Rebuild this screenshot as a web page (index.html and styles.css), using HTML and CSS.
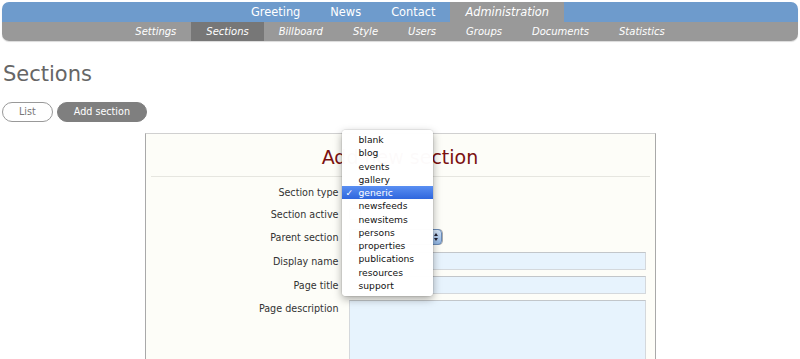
FILE: index.html
```html
<!DOCTYPE html>
<html lang="en">
<head>
    <meta charset="UTF-8">
    <title>Sections</title>
    <link rel="stylesheet" href="styles.css">
</head>
<body>
    <nav class="menu">
        <ul class="menu-top">
            <li><a href="#">Greeting</a></li>
            <li><a href="#">News</a></li>
            <li><a href="#">Contact</a></li>
            <li class="current"><a href="#">Administration</a></li>
        </ul>
        <ul class="menu-sub">
            <li><a href="#">Settings</a></li>
            <li class="current"><a href="#">Sections</a></li>
            <li><a href="#">Billboard</a></li>
            <li><a href="#">Style</a></li>
            <li><a href="#">Users</a></li>
            <li><a href="#">Groups</a></li>
            <li><a href="#">Documents</a></li>
            <li><a href="#">Statistics</a></li>
        </ul>
    </nav>

    <main>
        <h1 class="page-title">Sections</h1>

        <div class="actions">
            <a href="#" class="btn">List</a>
            <a href="#" class="btn btn-active">Add section</a>
        </div>

        <form class="box">
            <h2 class="box-title">Add new section</h2>
            <hr>
            <div class="fields">
                <label>Section type</label>
                <div class="field">
                    <div class="select select-type"></div>
                    <ul class="popup">
                        <li>blank</li>
                        <li>blog</li>
                        <li>events</li>
                        <li>gallery</li>
                        <li class="selected">generic</li>
                        <li>newsfeeds</li>
                        <li>newsitems</li>
                        <li>persons</li>
                        <li>properties</li>
                        <li>publications</li>
                        <li>resources</li>
                        <li>support</li>
                    </ul>
                </div>

                <label>Section active</label>
                <div class="field"><span class="checkbox"></span></div>

                <label>Parent section</label>
                <div class="field"><div class="select select-parent"><span class="arrows"></span></div></div>

                <label>Display name</label>
                <div class="field"><input type="text" class="text"></div>

                <label>Page title</label>
                <div class="field"><input type="text" class="text"></div>

                <label class="top">Page description</label>
                <div class="field"><textarea class="text area"></textarea></div>
            </div>
        </form>
    </main>
</body>
</html>
```

FILE: styles.css
```css
* {
    margin: 0;
    padding: 0;
    box-sizing: border-box;
}

body {
    font-family: "DejaVu Sans", Verdana, sans-serif;
    background-color: white;
    padding: 2px;
    color: #333;
}

ul {
    list-style: none;
}

a {
    text-decoration: none;
}

/* menu */

.menu {
    border-radius: 7px;
    overflow: hidden;
    box-shadow: 0 1px 1px rgba(0, 0, 0, 0.15);
}

.menu-top,
.menu-sub {
    display: flex;
    justify-content: center;
}

.menu-top {
    background-color: #6e9bcc;
    height: 20px;
}

.menu-sub {
    background-color: #999;
    height: 19px;
}

.menu a {
    display: block;
    color: white;
    padding: 0 15px;
}

.menu-top a {
    font-size: 11.4px;
    line-height: 20px;
}

.menu-top .current a {
    background-color: #999;
    font-style: italic;
}

.menu-sub a {
    font-size: 10px;
    line-height: 19px;
    font-style: italic;
}

.menu-sub .current a {
    background-color: #777;
}

/* page */

.page-title {
    font-size: 21px;
    font-weight: normal;
    color: #666;
    line-height: 26px;
    margin: 20px 0 0 1px;
}

.actions {
    display: flex;
    gap: 4px;
    margin-top: 15px;
}

.btn {
    display: block;
    height: 20px;
    line-height: 18px;
    font-size: 9.6px;
    padding: 0 16px;
    border: 1px solid #999;
    border-radius: 10px;
    color: #777;
    background-color: white;
}

.btn-active {
    background-color: #7f7f7f;
    border-color: #7f7f7f;
    color: white;
    padding: 0 16px;
}

/* form */

.box {
    width: 511px;
    margin: 11px auto 0;
    background-color: #fdfdf8;
    border: 1px solid #a9a9a9;
    border-top-color: #d0d0d0;
    padding: 12px 5px 40px;
}

.box-title {
    font-size: 19px;
    font-weight: normal;
    line-height: 22px;
    color: #7b1010;
    text-align: center;
}

.box hr {
    border: none;
    border-top: 1px solid #e6e6e0;
    margin-top: 8px;
}

.fields {
    display: grid;
    grid-template-columns: 188px 297px;
    column-gap: 10px;
    row-gap: 6px;
    margin-top: 7px;
    font-size: 9.6px;
}

.fields label {
    text-align: right;
    align-self: center;
    color: #333;
}

.fields label.top {
    align-self: start;
    padding-top: 3px;
}

.field {
    position: relative;
    display: flex;
    align-items: center;
}

.select {
    width: 94px;
    height: 16px;
    border: 1px solid #aaa;
    border-radius: 4px;
    background-color: white;
    position: relative;
}

.select-type {
    width: 80px;
}

.select-parent {
    height: 16px;
    margin: 1px 0;
}

.arrows {
    position: absolute;
    right: 0;
    top: -1px;
    width: 12px;
    height: 16px;
    border-radius: 0 4px 4px 0;
    border: 1px solid #6a8cb8;
    background: linear-gradient(#d7e6f7, #8fb4e2);
}

.arrows::before,
.arrows::after {
    content: "";
    position: absolute;
    left: 3px;
    border-left: 2.5px solid transparent;
    border-right: 2.5px solid transparent;
}

.arrows::before {
    top: 3px;
    border-bottom: 3px solid #223;
}

.arrows::after {
    bottom: 3px;
    border-top: 3px solid #223;
}

.checkbox {
    display: block;
    width: 12px;
    height: 12px;
    margin: 2px 0;
    border: 1px solid #999;
    border-radius: 2px;
    background-color: white;
}

.text {
    width: 297px;
    height: 18px;
    border: 1px solid #d4d8dc;
    border-top-color: #c2c6ca;
    background-color: #e7f3fd;
    font-family: inherit;
    font-size: 10px;
}

.area {
    height: 80px;
    resize: none;
}

/* open dropdown */

.popup {
    position: absolute;
    left: -7px;
    top: -54px;
    width: 91px;
    padding: 3px 0 4px;
    background-color: rgba(255, 255, 255, 0.98);
    border-radius: 4px;
    box-shadow: 0 3px 8px rgba(0, 0, 0, 0.35), 0 0 0 1px rgba(0, 0, 0, 0.06);
    font-size: 9.2px;
    line-height: 13.27px;
    color: #111;
    z-index: 2;
}

.popup li {
    padding-left: 17px;
    position: relative;
}

.popup .selected {
    background: linear-gradient(#5a8ff2, #2f66dd);
    color: white;
}

.popup .selected::before {
    content: "\2713";
    position: absolute;
    left: 4px;
}
```
